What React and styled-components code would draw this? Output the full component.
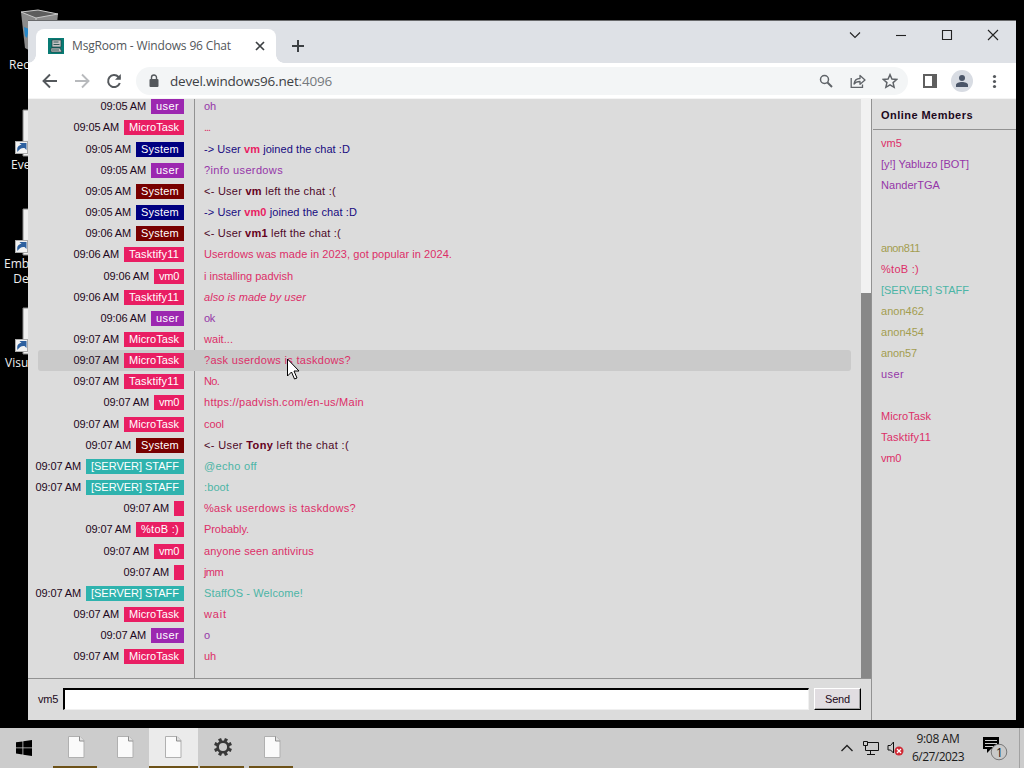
// Libs
import React, { useLayoutEffect, useRef, useState } from 'react';
import styled, { createGlobalStyle } from 'styled-components';

const PINK = '#e91e63';
const PURPLE = '#9c27b0';
const TEAL = '#2fb3ae';
const OLIVE = '#a39d50';
const NAVY = '#000080';
const MAROON = '#780000';

const GlobalStyle = createGlobalStyle`
	* {
		box-sizing: border-box;
	}

	body {
		margin: 0;
		background: #000;
		overflow: hidden;
	}
`;

const Screen = styled.div`
	position: relative;
	display: flex;
	flex-direction: column;
	width: 1024px;
	height: 768px;
	overflow: hidden;
	background: #000;
	font-family: 'Open Sans', 'Noto Sans', sans-serif;
`;

const Desktop = styled.div`
	flex: 1;
	padding: 21px 8px 8px 28px;
`;

// Desktop shortcuts, partly behind the window
const Shortcut = styled.div`
	position: absolute;
	top: ${(props) => props.$top}px;
	left: 0;
	width: 78px;
	height: 80px;
	color: #eee;
	font-size: 12px;
	line-height: 15px;
	text-align: left;
	white-space: pre;

	svg {
		display: block;
		margin-left: 14px;
	}
`;

const Caption = styled.div`
	padding-left: ${(props) => props.$left}px;
`;

const Window = styled.div`
	position: relative;
	display: flex;
	flex-direction: column;
	height: 699px;
	background: #dcdcdc;
	box-shadow: 0 -1px 0 #68696b;
`;

const TabStrip = styled.div`
	display: flex;
	height: 42px;
	padding: 8px 0 0 8px;
	background: #dee1e6;
`;

const Tab = styled.div`
	position: relative;
	display: flex;
	align-items: center;
	width: 240px;
	padding: 0 9px 0 12px;
	border-radius: 8px 8px 0 0;
	background: #fff;
	color: #53575b;
	font-size: 12px;

	&::before,
	&::after {
		content: '';
		position: absolute;
		bottom: 0;
		width: 8px;
		height: 8px;
	}

	&::before {
		left: -8px;
		background: radial-gradient(circle at 0 0, transparent 7.5px, #fff 8px);
	}

	&::after {
		right: -8px;
		background: radial-gradient(circle at 100% 0, transparent 7.5px, #fff 8px);
	}
`;

const TabTitle = styled.div`
	flex: 1;
	padding-left: 8px;
	line-height: 16px;
`;

const NewTab = styled.div`
	padding: 10px 0 0 15px;
	line-height: 0;
`;

const WindowButtons = styled.div`
	display: flex;
	gap: 30px;
	margin: -2px 15px 0 auto;
`;

const Toolbar = styled.div`
	display: flex;
	align-items: center;
	height: 36px;
	padding: 0 13px 0 14px;
	background: #fff;
	border-bottom: 1px solid #f4f4f4;
`;

const NavButtons = styled.div`
	display: flex;
	gap: 16px;
	width: 94px;
`;

const Omnibox = styled.div`
	display: flex;
	align-items: center;
	width: 772px;
	height: 28px;
	padding: 0 10px 0 10px;
	border-radius: 14px;
	background: #f3f5f6;
	color: #3d4044;
	font-size: 13.5px;

	em {
		color: #75797d;
		font-style: normal;
	}
`;

const Url = styled.div`
	flex: 1;
	padding-left: 8px;
`;

const IconGroup = styled.div`
	display: flex;
	align-items: center;
	gap: ${(props) => props.$gap}px;
`;

const BrowserActions = styled(IconGroup)`
	margin-left: 14px;
`;

const Page = styled.div`
	display: flex;
	flex: 1;
	min-height: 0;
	color: #1c0820;
	font-family: 'Liberation Sans', Arial, sans-serif;
	font-size: 11px;
`;

const Chat = styled.div`
	display: flex;
	flex-direction: column;
	width: 844px;
	border-right: 1px solid #929292;
`;

const History = styled.div`
	display: flex;
	height: 580px;
	border-bottom: 1px solid #929292;
`;

const Messages = styled.div`
	display: flex;
	flex: 1;
	flex-direction: column;
	justify-content: flex-end;
	padding: 0 10px 10.6px;
	overflow: hidden;
	background: linear-gradient(#929292, #929292) 166px 0 / 1px 100% no-repeat;
`;

const Row = styled.div`
	display: flex;
	flex-shrink: 0;
	align-items: center;
	height: 21.17px;
	border-radius: 3px;
	background: ${(props) => (props.$hovered ? '#cacaca' : 'transparent')};
`;

const Author = styled.div`
	display: flex;
	align-items: center;
	justify-content: flex-end;
	gap: 5px;
	width: 146px;
	line-height: 15px;
	white-space: nowrap;
`;

const Chip = styled.span`
	height: 15px;
	padding: 0 5px;
	background: ${(props) => props.$color};
	color: #fff;
`;

const Body = styled.div`
	padding: 0 0 1px 20px;
	color: ${(props) => props.$color};
	font-style: ${(props) => (props.$italic ? 'italic' : 'normal')};
	white-space: nowrap;

	b {
		color: ${(props) => props.$nameColor};
	}
`;

const ScrollTrack = styled.div`
	display: flex;
	align-items: flex-end;
	width: 10px;
	background: #f1f1f1;
`;

const ScrollThumb = styled.div`
	width: 100%;
	height: 385px;
	background: #888;
`;

const Composer = styled.div`
	display: flex;
	align-items: center;
	flex: 1;
	padding: 0 10px 1px;
`;

const Field = styled.div`
	width: 746px;
	height: 22px;
	margin: 0 5px 0 5px;
	border: 2px solid;
	border-color: #000 #f0f0f0 #f0f0f0 #000;
	border-right-width: 1px;
	border-bottom-width: 1px;
	background: #fff;
`;

const SendButton = styled.div`
	display: flex;
	align-items: center;
	justify-content: center;
	width: 47px;
	height: 22px;
	border: 1px solid;
	border-color: #fff #000 #000 #fff;
	box-shadow: inset -1px -1px 0 #a0a0a0;
	background: #e1dde1;
`;

const Members = styled.div`
	flex: 1;
`;

const MembersTitle = styled.div`
	height: 31px;
	margin-left: 1px;
	padding: 0 0 0 8px;
	border-bottom: 1px solid #929292;
	font-weight: bold;
	line-height: 32px;
`;

const MemberList = styled.div`
	padding: 3px 0 0 9px;
`;

const Member = styled.div`
	height: 21px;
	color: ${(props) => props.$color};
	line-height: 21px;
`;

const Taskbar = styled.div`
	display: flex;
	height: 40px;
	background: #cccccc;
	color: #1b1b1b;
`;

const StartButton = styled.div`
	width: 51px;
	padding: 11px 0 0 16px;
`;

const TaskButton = styled.div`
	display: flex;
	align-items: center;
	justify-content: center;
	width: 49px;
	padding: ${(props) => (props.$active ? '0 1px 0 0' : '0 4px 0 5px')};
	background: ${(props) => (props.$active ? '#ebebeb' : 'transparent')};
	border-bottom: 2px solid transparent;
	border-image: ${(props) => props.$edge};
`;

const Tray = styled.div`
	display: flex;
	align-items: center;
	margin-left: auto;
	padding-right: 4px;
`;

const Clock = styled.div`
	width: 62px;
	margin: 0 13px 0 3px;
	font-size: 12px;
	line-height: 18px;
	text-align: center;
	white-space: nowrap;
`;

const ShowDesktop = styled.div`
	width: 1px;
	height: 100%;
	margin-left: 11px;
	background: #a2a2a2;
`;

const Pointer = styled.svg`
	position: absolute;
	top: 358px;
	left: 286px;
`;

const FitText = styled.span`
	display: inline-block;
	white-space: pre;
`;

const Fit = ({ w, children }) => {
	const ref = useRef(null);
	const [spacing, setSpacing] = useState(0);

	useLayoutEffect(() => {
		const el = ref.current;
		setSpacing((w - el.getBoundingClientRect().width) / el.textContent.length);
	}, [w]);

	return <FitText ref={ref} style={{ letterSpacing: spacing }}>{children}</FitText>;
};

const authors = {
	user: { name: 'user', w: 23, color: PURPLE },
	micro: { name: 'MicroTask', w: 50, color: PINK },
	joined: { name: 'System', w: 38, color: NAVY },
	left: { name: 'System', w: 38, color: MAROON },
	task: { name: 'Tasktify11', w: 50, color: PINK },
	vm0: { name: 'vm0', w: 20, color: PINK },
	staff: { name: '[SERVER] STAFF', w: 88, color: TEAL },
	blank: { name: '', w: 0, color: PINK },
	tob: { name: '%toB :)', w: 38, color: PINK }
};

const messages = [
	{ time: '09:05 AM', by: 'user', text: 'oh', w: 12 },
	{ time: '09:05 AM', by: 'micro', text: '...', w: 6 },
	{ time: '09:05 AM', by: 'joined', who: 'vm', w: 146 },
	{ time: '09:05 AM', by: 'user', text: '?info userdows', w: 79 },
	{ time: '09:05 AM', by: 'left', who: 'vm', w: 132 },
	{ time: '09:05 AM', by: 'joined', who: 'vm0', w: 153 },
	{ time: '09:06 AM', by: 'left', who: 'vm1', w: 137 },
	{ time: '09:06 AM', by: 'task', text: 'Userdows was made in 2023, got popular in 2024.', w: 248 },
	{ time: '09:06 AM', by: 'vm0', text: 'i installing padvish', w: 89 },
	{ time: '09:06 AM', by: 'task', text: 'also is made by user', w: 102, italic: true },
	{ time: '09:06 AM', by: 'user', text: 'ok', w: 11 },
	{ time: '09:07 AM', by: 'micro', text: 'wait...', w: 29 },
	{ time: '09:07 AM', by: 'micro', text: '?ask userdows is taskdows?', w: 147, hovered: true },
	{ time: '09:07 AM', by: 'task', text: 'No.', w: 15 },
	{ time: '09:07 AM', by: 'vm0', text: 'https://padvish.com/en-us/Main', w: 160 },
	{ time: '09:07 AM', by: 'micro', text: 'cool', w: 20 },
	{ time: '09:07 AM', by: 'left', who: 'Tony', w: 145 },
	{ time: '09:07 AM', by: 'staff', text: '@echo off', w: 53 },
	{ time: '09:07 AM', by: 'staff', text: ':boot', w: 25 },
	{ time: '09:07 AM', by: 'blank', text: '%ask userdows is taskdows?', w: 152 },
	{ time: '09:07 AM', by: 'tob', text: 'Probably.', w: 45 },
	{ time: '09:07 AM', by: 'vm0', text: 'anyone seen antivirus', w: 110 },
	{ time: '09:07 AM', by: 'blank', text: 'jmm', w: 19 },
	{ time: '09:07 AM', by: 'staff', text: 'StaffOS - Welcome!', w: 99 },
	{ time: '09:07 AM', by: 'micro', text: 'wait', w: 23 },
	{ time: '09:07 AM', by: 'user', text: 'o', w: 6 },
	{ time: '09:07 AM', by: 'micro', text: 'uh', w: 12 }
];

// Text on the grey page is drawn a little softer than the chips
const textColor = {
	[PINK]: '#dc2f68',
	[PURPLE]: '#9536a8',
	[TEAL]: '#4cb5a6',
	[OLIVE]: OLIVE
};

const members = [
	{ name: 'vm5', w: 21, color: PINK },
	{ name: '[y!] Yabluzo [BOT]', w: 88, color: PURPLE },
	{ name: 'NanderTGA', w: 59, color: PURPLE },
	{ name: '' },
	{ name: '' },
	{ name: 'anon811', w: 39, color: OLIVE },
	{ name: '%toB :)', w: 38, color: PINK },
	{ name: '[SERVER] STAFF', w: 88, color: TEAL },
	{ name: 'anon462', w: 43, color: OLIVE },
	{ name: 'anon454', w: 43, color: OLIVE },
	{ name: 'anon57', w: 36, color: OLIVE },
	{ name: 'user', w: 23, color: PURPLE },
	{ name: '' },
	{ name: 'MicroTask', w: 50, color: PINK },
	{ name: 'Tasktify11', w: 50, color: PINK },
	{ name: 'vm0', w: 20, color: PINK }
];

const bodyColor = { joined: '#170b80', left: '#4d0828' };

const Message = ({ time, by, text, who, w, italic, hovered }) => {
	const author = authors[by];
	const joined = by === 'joined';

	return (
		<Row $hovered={hovered}>
			<Author>
				<Fit w={45.5}>{time}</Fit>
				<Chip $color={author.color}>{author.name && <Fit w={author.w}>{author.name}</Fit>}</Chip>
			</Author>
			<Body
				$color={bodyColor[by] || textColor[author.color]}
				$nameColor={joined ? PINK : '#650020'}
				$italic={italic}
			>
				<Fit w={w}>
					{who
						? <>{joined ? '-> User ' : '<- User '}<b>{who}</b>{joined ? ' joined the chat :D' : ' left the chat :('}</>
						: text}
				</Fit>
			</Body>
		</Row>
	);
};

const FileShortcut = ({ top, children }) => (
	<Shortcut $top={top}>
		<svg width="48" height="48" viewBox="0 0 48 48">
			<path d="M9 1h30v46H9z" fill="#eee" stroke="#888" />
			<rect x="1.500" y="32.500" width="12" height="12" fill="#f2f2f2" stroke="#aaa" />
			<path d="M3.500 43c-1-5 1-7 4-7l-2-2h7v7l-2-2c-3-.5-5 1-7 4z" fill="#2d609f" />
		</svg>
		{children}
	</Shortcut>
);

const FileIcon = () => (
	<svg width="17" height="22" viewBox="0 0 17 22">
		<path d="M.5.5h11.500l4 4v17H.5z" fill="#fafafa" stroke="#b0b0b0" />
		<path d="M11.500.5v4.500h4.500" fill="#e0e0e0" stroke="#8d8d8d" />
	</svg>
);

const GearIcon = () => (
	<svg width="20" height="20" viewBox="0 0 20 20" fill="none" stroke="#383838">
		<circle cx="10" cy="10" r="5.300" strokeWidth="2.500" />
		<g strokeWidth="3.200">
			{[0, 45, 90, 135, 180, 225, 270, 315].map((deg) => (
				<path key={deg} d="M10 4V1" transform={`rotate(${deg + 22.5} 10 10)`} />
			))}
		</g>
	</svg>
);

const EDGE = 'linear-gradient(90deg, transparent 4px, #6d5218 4px, #6d5218 44px, transparent 44px) 2';

export default function App() {
	return (
		<Screen>
			<GlobalStyle />
			<Desktop>
				<Shortcut $top={9}>
					<svg width="48" height="48" viewBox="0 0 48 48">
						<path d="M7 3L24 1l20 4-4 37-18 3-11-6z" fill="#8b8b8b" />
						<path d="M7 3L24 1l20 4-22 4z" fill="#5d5d5d" stroke="#c8c8c8" />
						<path d="M10 18l5 2-2 9-2-2z" fill="#2788c8" />
						<path d="M22 9v36" stroke="#ccc" />
					</svg>
					<Caption $left={9}>Recycle Bin</Caption>
				</Shortcut>
				<FileShortcut top={109}><Caption $left={11}>Everything</Caption></FileShortcut>
				<FileShortcut top={208}><Caption $left={4}>{'Embarcadero\n   Dev-C++'}</Caption></FileShortcut>
				<FileShortcut top={307}><Caption $left={5}>Visual Studio</Caption></FileShortcut>

				<Window>
					<TabStrip>
						<Tab>
							<svg width="16" height="16" viewBox="0 0 16 16">
								<path d="M0 0h16v16H0z" fill="#087b74" />
								<path d="M4 2h9v7H4zM3 10h9l2 4H3z" fill="#c5c5c5" stroke="#203d40" strokeWidth=".7" />
								<path d="M5.500 4h5M5.500 6.500h6M4 12h7" stroke="#365a5a" />
							</svg>
							<TabTitle><Fit w={159}>MsgRoom - Windows 96 Chat</Fit></TabTitle>
							<svg width="14" height="14" viewBox="0 0 14 14" stroke="#3c4043" strokeWidth="1.700">
								<path d="M3 3l8 8M11 3l-8 8" />
							</svg>
						</Tab>
						<NewTab>
							<svg width="14" height="14" viewBox="0 0 14 14" stroke="#3c4043" strokeWidth="2">
								<path d="M7 1v12M1 7h12" />
							</svg>
						</NewTab>
						<WindowButtons>
							{['M3 5.500l5 5 5-5', 'M3 8.500h10', 'M3.500 3.500h9v9h-9z', 'M3 3l10 10M13 3L3 13'].map((d) => (
								<svg key={d} width="16" height="16" viewBox="0 0 16 16" fill="none" stroke="#222" strokeWidth="1.100">
									<path d={d} />
								</svg>
							))}
						</WindowButtons>
					</TabStrip>

					<Toolbar>
						<NavButtons>
							<svg width="16" height="16" viewBox="0 0 16 16" fill="none" stroke="#54585c" strokeWidth="1.900">
								<path d="M15 8H2M8 1.500L1.500 8 8 14.500" />
							</svg>
							<svg width="16" height="16" viewBox="0 0 16 16" fill="none" stroke="#b8babd" strokeWidth="1.900">
								<path d="M1 8h13M8 1.500L14.500 8 8 14.500" />
							</svg>
							<svg width="16" height="16" viewBox="0 0 16 16" fill="none" stroke="#54585c" strokeWidth="2">
								<path d="M13.800 10A6 6 0 1 1 12.500 4L14 5.500" />
								<path d="M9 6.800h5.800V1z" fill="#54585c" stroke="none" />
							</svg>
						</NavButtons>
						<Omnibox>
							<svg width="16" height="16" viewBox="0 0 16 16">
								<path d="M4.500 6h7q1 0 1 1v6q0 1-1 1h-7q-1 0-1-1V7q0-1 1-1z" fill="#54585c" />
								<path d="M5.500 6V4.500a2.500 2.500 0 0 1 5 0V6" fill="none" stroke="#54585c" strokeWidth="1.400" />
							</svg>
							<Url><Fit w={162}>devel.windows96.net<em>:4096</em></Fit></Url>
							<IconGroup $gap={16}>
								<svg width="16" height="16" viewBox="0 0 16 16" fill="none" stroke="#5f6368" strokeWidth="1.500">
									<circle cx="6.500" cy="6.500" r="4" />
									<path d="M9.500 9.500l4.500 4.500" strokeWidth="1.900" />
								</svg>
								<svg width="16" height="16" viewBox="0 0 16 16" fill="none" stroke="#5f6368" strokeWidth="1.300">
									<path d="M1.200 5v9.300h11.300V11.500" />
									<path d="M4 11c.5-4 2.500-5.500 6-5.500V2.500L15 7l-5 4.300V8.500C7 8.500 5.500 9 4 11z" strokeLinejoin="round" />
								</svg>
								<svg width="16" height="16" viewBox="0 0 24 24" fill="none" stroke="#5f6368" strokeWidth="2.200">
									<path d="M12 2.500l2.900 6.600 7.100.6-5.400 4.700 1.600 7-6.200-3.700-6.200 3.700 1.600-7L2 9.700l7.100-.6z" />
								</svg>
							</IconGroup>
						</Omnibox>
						<BrowserActions $gap={13}>
							<svg width="16" height="16" viewBox="0 0 16 16">
								<path d="M2 2h12v12H2z" fill="none" stroke="#5f5f5f" strokeWidth="2" />
								<path d="M10 2h5v12h-5z" fill="#5f5f5f" />
							</svg>
							<svg width="22" height="22" viewBox="0 0 22 22">
								<circle cx="11" cy="11" r="11" fill="#d8dce3" />
								<circle cx="11" cy="8" r="3" fill="#4a5568" />
								<path d="M5 17v-2c0-4 12-4 12 0v2z" fill="#4a5568" />
							</svg>
							<svg width="16" height="16" viewBox="0 0 16 16" fill="#54585c">
								<circle cx="8.500" cy="3.500" r="1.600" />
								<circle cx="8.500" cy="8.500" r="1.600" />
								<circle cx="8.500" cy="13.500" r="1.600" />
							</svg>
						</BrowserActions>
					</Toolbar>

					<Page>
						<Chat>
							<History>
								<Messages>
									{messages.map((message, i) => <Message key={i} {...message} />)}
								</Messages>
								<ScrollTrack><ScrollThumb /></ScrollTrack>
							</History>
							<Composer>
								<Fit w={20}>vm5</Fit>
								<Field />
								<SendButton><Fit w={25}>Send</Fit></SendButton>
							</Composer>
						</Chat>
						<Members>
							<MembersTitle><Fit w={92}>Online Members</Fit></MembersTitle>
							<MemberList>
								{members.map(({ name, w, color }, i) => (
									<Member key={i} $color={textColor[color]}>{name && <Fit w={w}>{name}</Fit>}</Member>
								))}
							</MemberList>
						</Members>
					</Page>
				</Window>
			</Desktop>

			<Taskbar>
				<StartButton>
					<svg width="16" height="16" viewBox="0 0 16 16">
						<path d="M0 2.300l6.500-.9v6.100H0zM7.300 1.300L16 0v7.500H7.300zM0 8.300h6.500v6.100L0 13.600zM7.300 8.300H16V16l-8.700-1.300z" />
					</svg>
				</StartButton>
				<TaskButton $edge={EDGE}><FileIcon /></TaskButton>
				<TaskButton><FileIcon /></TaskButton>
				<TaskButton $active $edge="linear-gradient(#6d5218, #6d5218) 2"><FileIcon /></TaskButton>
				<TaskButton $edge={EDGE}><GearIcon /></TaskButton>
				<TaskButton $edge={EDGE}><FileIcon /></TaskButton>
				<Tray>
					<IconGroup $gap={8}>
						<svg width="14" height="16" viewBox="0 0 14 16" fill="none" stroke="#222" strokeWidth="1.400">
							<path d="M1.500 11L7 5.500l5.500 5.500" />
						</svg>
						<svg width="17" height="16" viewBox="0 0 17 16" fill="none" stroke="#111">
							<path d="M6 2.500h10.500v8H3.500V7M8.500 10.500v4M5 14.500h8M1.500 1.500h4v4h-4zM3.500 5.500v3" />
						</svg>
						<svg width="17" height="16" viewBox="0 0 17 16">
							<path d="M1 5.500h2.500L6.500 2v11L3.500 10H1z" fill="none" stroke="#111" />
							<circle cx="12" cy="11" r="4.500" fill="#d02a35" />
							<path d="M10 9l4 4M14 9l-4 4" stroke="#fff" strokeWidth="1.300" />
						</svg>
					</IconGroup>
					<Clock><Fit w={43}>9:08 AM</Fit><br /><Fit w={52}>6/27/2023</Fit></Clock>
					<svg width="26" height="26" viewBox="0 0 26 26">
						<path d="M1 2h16v12H9l-4 4v-4H1z" fill="#000" />
						<path d="M3 5.500h12M3 8.500h12M3 11.500h8" stroke="#ccc" />
						<circle cx="17" cy="17" r="7.800" fill="#c9c9c9" stroke="#777" />
						<text x="14" y="21.500" fontSize="12" fill="#111">1</text>
					</svg>
					<ShowDesktop />
				</Tray>
			</Taskbar>

			<Pointer width="14" height="23" viewBox="0 0 14 23">
				<path d="M1.500 1v17l4-4 3 7 2.500-1-3-7h5z" fill="#fff" stroke="#000" />
			</Pointer>
		</Screen>
	);
}
